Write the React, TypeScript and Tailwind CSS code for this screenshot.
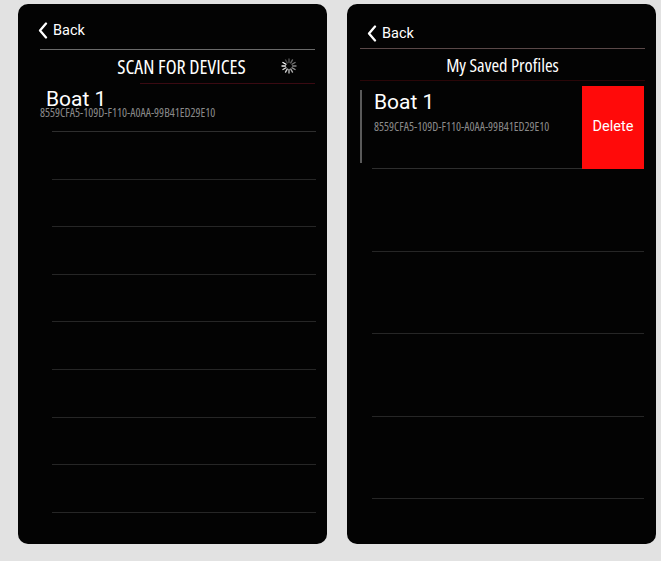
import React from "react";

const sans = { fontFamily: "Roboto, 'Liberation Sans', sans-serif" };
const cond = {
  fontFamily: "'Open Sans', 'DejaVu Sans Condensed', sans-serif",
  fontStretch: "75%",
};

function Chevron() {
  return (
    <svg width="10" height="17" viewBox="0 0 10 17" className="shrink-0">
      <path d="M8 1.5 L2 8.5 L8 15.5" fill="none" stroke="white" strokeWidth="2.3" strokeLinecap="round" strokeLinejoin="round" />
    </svg>
  );
}

function Spinner() {
  const spokes = Array.from({ length: 12 });
  return (
    <svg width="16" height="16" viewBox="-8 -8 16 16">
      {spokes.map((_, i) => {
        const a = (i * 30 * Math.PI) / 180;
        const op = 0.25 + (0.75 * ((i + 4) % 12)) / 11;
        return (
          <line
            key={i}
            x1={Math.cos(a) * 3.5}
            y1={Math.sin(a) * 3.5}
            x2={Math.cos(a) * 7}
            y2={Math.sin(a) * 7}
            stroke="white"
            strokeOpacity={op}
            strokeWidth="1.4"
            strokeLinecap="round"
          />
        );
      })}
    </svg>
  );
}

export default function App() {
  const leftRows = Array.from({ length: 8 });
  const rightRows = Array.from({ length: 4 });
  return (
    <div className="w-[661px] h-[561px] bg-[#e2e2e2] flex gap-[20px] pl-[18px] pt-[4px]">
      {/* Left panel */}
      <div className="w-[309px] h-[540px] bg-[#030303] rounded-[10px] flex flex-col overflow-hidden">
        <div className="ml-[22px] mr-[12px] h-[46px] border-b border-[#6a6a6a] flex items-start pt-[17px]">
          <div className="-ml-[2px] flex items-center gap-[5px] mt-[1px]">
            <Chevron />
            <span className="text-white text-[14.5px] leading-none mt-[1px]" style={sans}>Back</span>
          </div>
        </div>
        <div className="relative h-[34px] flex items-center justify-center">
          <span className="text-white text-[20px] leading-none ml-[18px]" style={cond}>SCAN FOR DEVICES</span>
          <div className="absolute left-[263px] top-[8px]">
            <Spinner />
          </div>
          <div className="absolute left-[122px] right-[12px] bottom-0 h-px bg-[#3a0a12]" />
        </div>
        <div className="h-[48px] shrink-0 relative">
          <div className="absolute left-[28px] top-[8px] text-white text-[21px] leading-[14px]" style={sans}>Boat 1</div>
          <div className="absolute left-[22px] top-[22px] text-[#8a8a8a] text-[11.8px] leading-[12px]" style={cond}>
            8559CFA5-109D-F110-A0AA-99B41ED29E10
          </div>
          <div className="absolute left-[34px] right-[11px] bottom-0 h-px bg-[#2e2e2e]" />
        </div>
        {leftRows.map((_, i) => (
          <div key={i} className="h-[47.6px] shrink-0 ml-[34px] mr-[11px] border-b border-[#262626]" />
        ))}
      </div>

      {/* Right panel */}
      <div className="w-[309px] h-[540px] bg-[#030303] rounded-[10px] flex flex-col overflow-hidden">
        <div className="ml-[13px] mr-[11px] h-[45px] border-b border-[#5a4848] flex items-start pt-[20px]">
          <div className="ml-[7px] flex items-center gap-[5px] mt-[1px]">
            <Chevron />
            <span className="text-white text-[14.5px] leading-none mt-[1px]" style={sans}>Back</span>
          </div>
        </div>
        <div className="ml-[13px] mr-[11px] h-[32px] border-b border-[#2a0608] flex items-center justify-center pt-[1px]">
          <span className="text-white text-[18.5px] leading-none" style={cond}>My Saved Profiles</span>
        </div>
        <div className="mt-[5px] h-[83px] shrink-0 flex">
          <div className="w-[235px] relative">
            <div className="absolute left-[13px] top-[4px] h-[73px] w-[2px] bg-[#5a5a5a]" />
            <div className="absolute left-[27px] top-[6px] text-white text-[21px] leading-none" style={sans}>Boat 1</div>
            <div className="absolute left-[27px] top-[35px] text-[#8a8a8a] text-[11.8px] leading-none" style={cond}>
              8559CFA5-109D-F110-A0AA-99B41ED29E10
            </div>
            <div className="absolute left-[25px] right-0 bottom-0 h-px bg-[#2e2e2e]" />
          </div>
          <div className="w-[62px] bg-[#ff0a0a] flex items-center justify-center">
            <span className="text-white text-[14.5px] leading-none" style={sans}>Delete</span>
          </div>
        </div>
        {rightRows.map((_, i) => (
          <div key={i} className="h-[82.5px] shrink-0 ml-[25px] mr-[12px] border-b border-[#262626]" />
        ))}
      </div>
    </div>
  );
}
